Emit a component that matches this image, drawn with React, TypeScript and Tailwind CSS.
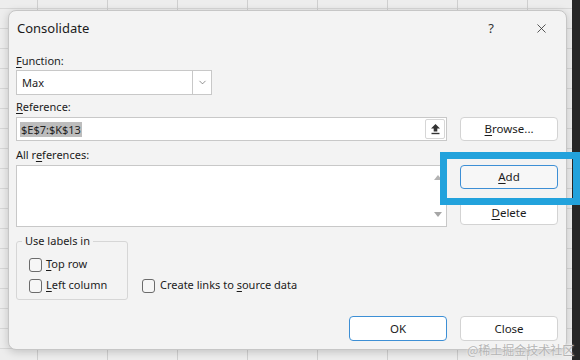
import { ChevronDown, X } from "lucide-react";

const Btn = ({ children, focus, className = "" }: { children: React.ReactNode; focus?: boolean; className?: string }) => (
  <button
    className={`w-[98px] rounded-[4px] border text-[11.5px] text-[#1b1b1b] flex items-center justify-center ${
      focus ? "border-[#3d8fd5] bg-[#f7f7f7]" : "border-[#d3d3d3] bg-white"
    } ${className}`}
  >
    {children}
  </button>
);

const Check = ({ children, className = "" }: { children: React.ReactNode; className?: string }) => (
  <div className={`flex items-center gap-[4px] h-[21px] ${className}`}>
    <span className="w-[13px] h-[14px] rounded-[3px] border border-[#6b6b6b] bg-[#f6f6f6]" />
    <span className="text-[11px] text-[#1b1b1b]">{children}</span>
  </div>
);

const App = () => {
  return (
    <div className="relative w-[580px] h-[360px] overflow-hidden flex bg-[#ededed] bg-[linear-gradient(90deg,#cfcfcf_1px,transparent_1px),linear-gradient(#d7d7d7_1px,transparent_1px)] bg-[length:70px_100%,100%_20px] bg-[position:37px_0,0_8px] font-['Noto_Sans',sans-serif]">
      <div className="w-[8px] shrink-0" />

      {/* Dialog */}
      <div className="mt-[10px] w-[559px] h-[340px] shrink-0 rounded-[8px] border border-[#c6c6c6] bg-[#f3f3f3] shadow-[0_2px_8px_rgba(0,0,0,0.18)] flex flex-col">
        {/* Title bar */}
        <div className="h-[35px] flex items-center justify-between pl-[8px] pr-[5px]">
          <span className="text-[13px] text-[#1b1b1b]">Consolidate</span>
          <div className="flex h-full items-center gap-[10px]">
            <span className="w-[40px] text-center text-[13px] text-[#333]">?</span>
            <span className="w-[40px] flex justify-center text-[#333]">
              <X size={15} strokeWidth={1.3} />
            </span>
          </div>
        </div>

        <div className="flex flex-col pl-[7px] pr-[8px] text-[11px] text-[#1b1b1b]">
          <div className="mt-[8px] h-[14px] leading-[14px]">
            <u className="underline-offset-2">F</u>unction:
          </div>
          <div className="mt-[2px] w-[196px] h-[25px] flex border border-[#c8c8c8] bg-white">
            <span className="flex-1 pl-[5px] leading-[23px]">Max</span>
            <span className="w-[19px] border-l border-[#c8c8c8] flex items-center justify-center text-[#555]">
              <ChevronDown size={11} strokeWidth={1.4} />
            </span>
          </div>

          <div className="mt-[5px] h-[14px] leading-[14px]">
            <u className="underline-offset-2">R</u>eference:
          </div>
          <div className="mt-[3px] h-[24px] flex gap-[13px]">
            <div className="w-[432px] flex items-center border border-[#c8c8c8] bg-white pl-[3px] pr-[1px]">
              <span className="bg-[#bdbdbd] text-[#222] leading-[15px] px-[1px]">$E$7:$K$13</span>
              <span className="ml-auto w-[20px] h-[20px] border border-[#d6d6d6] rounded-[2px] bg-white flex items-center justify-center">
                <svg width="11" height="12" viewBox="0 0 11 12">
                  <polygon points="5.5,1 10,5.5 7.3,5.5 7.3,8.5 3.7,8.5 3.7,5.5 1,5.5" fill="#333" />
                  <line x1="1.5" y1="10.5" x2="9.5" y2="10.5" stroke="#333" strokeWidth="1.4" />
                </svg>
              </span>
            </div>
            <Btn>
              <span>
                <u className="underline-offset-2">B</u>rowse...
              </span>
            </Btn>
          </div>

          <div className="mt-[7px] h-[14px] leading-[14px]">
            All r<u className="underline-offset-2">e</u>ferences:
          </div>
          <div className="mt-[3px] flex gap-[13px]">
            <div className="w-[432px] h-[62px] border border-[#c8c8c8] bg-white flex justify-end">
              <div className="w-[14px] flex flex-col items-center justify-between py-[9px] mr-[1px]">
                <svg width="8" height="5" viewBox="0 0 8 5">
                  <polygon points="4,0 8,5 0,5" fill="#b3b3b3" />
                </svg>
                <svg width="8" height="5" viewBox="0 0 8 5">
                  <polygon points="0,0 8,0 4,5" fill="#a6a6a6" />
                </svg>
              </div>
            </div>
            <div className="flex flex-col gap-[12px]">
              <Btn focus className="h-[24px]">
                <span>
                  <u className="underline-offset-2">A</u>dd
                </span>
              </Btn>
              <Btn className="h-[24px]">
                <span>
                  <u className="underline-offset-2">D</u>elete
                </span>
              </Btn>
            </div>
          </div>

          <div className="mt-[7px] flex items-start">
            <fieldset className="w-[112px] border border-[#d6d6d6] rounded-[3px] px-[12px] pb-[3px]">
              <legend className="ml-[-7px] px-[3px] h-[14px] leading-[14px]">Use labels in</legend>
              <div className="mt-[6px]">
                <Check>
                  <u className="underline-offset-2">T</u>op row
                </Check>
                <Check>
                  <u className="underline-offset-2">L</u>eft column
                </Check>
              </div>
            </fieldset>
            <Check className="ml-[14px] mt-[41px] gap-[5px]">
              Create links to <u className="underline-offset-2">s</u>ource data
            </Check>
          </div>

          <div className="mt-[16px] flex justify-end gap-[13px]">
            <Btn focus className="h-[25px] bg-white">
              OK
            </Btn>
            <Btn className="h-[25px]">Close</Btn>
          </div>
        </div>
      </div>

      <div className="ml-auto w-[8px] shrink-0 bg-[#272727]" />

      {/* Highlight annotation */}
      <div className="absolute left-[440px] top-[152px] w-[140px] h-[53px] border-[7px] border-[#22a2dc]" />

      {/* Watermark */}
      <div className="absolute left-[467px] top-[341px] text-[12px] text-[#b4b4b4] font-['Noto_Sans_CJK_SC',sans-serif] [text-shadow:0_0_2px_#ffffff]">
        @稀土掘金技术社区
      </div>
    </div>
  );
};

export default App;
